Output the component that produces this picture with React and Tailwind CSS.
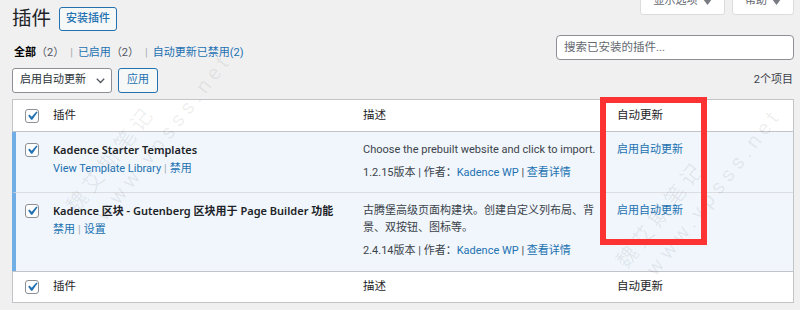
import React from 'react';

const font = { fontFamily: 'Roboto, "Noto Sans CJK SC", sans-serif' };
const titleFont = { fontFamily: '"Noto Sans", "Noto Sans CJK SC", sans-serif' };

function Check() {
  return (
    <span className="flex h-[14px] w-[14px] items-center justify-center rounded-[3px] border border-[#8c8f94] bg-white">
      <svg width="18" height="18" viewBox="0 0 20 20" className="shrink-0">
        <path d="M14.83 4.89l1.34.94-5.81 8.38H9.02L5.78 9.67l1.34-1.25 2.57 2.4z" fill="#2271b1" />
      </svg>
    </span>
  );
}

function Caret() {
  return (
    <svg width="9" height="6" viewBox="0 0 9 6" className="ml-[5px]">
      <path d="M0 0h9L4.5 6z" fill="#787c82" />
    </svg>
  );
}

const Sep = () => <span className="ml-[6px] mr-[5px] text-[#a7aaad]">|</span>;
const ActSep = () => <span className="mx-[3px] text-[#a7aaad]">|</span>;

function HeadRow({ top }) {
  return (
    <div
      className={`grid grid-cols-[40px_310px_254px_1fr] items-center border-l border-[#c3c4c7] text-[11.5px] text-[#1d2327] ${
        top ? 'h-[32px] border-b' : 'h-[31px] border-t'
      }`}
    >
      <div className="pl-[12px]">
        <Check />
      </div>
      <div>插件</div>
      <div>描述</div>
      <div>自动更新</div>
    </div>
  );
}

function PluginRow({ name, actions, desc, version, height, line }) {
  return (
    <div
      className={`grid grid-cols-[37px_310px_254px_1fr] border-l-4 border-[#72aee6] bg-[#f0f6fc] text-[11px] leading-[17px] ${height} ${line}`}
    >
      <div className="pl-[9px] pt-[11px]">
        <Check />
      </div>
      <div className="pt-[9px]">
        <div className="font-semibold text-[#1d2327]" style={titleFont}>
          {name}
        </div>
        <div className="mt-[2px] text-[#2271b1]">{actions}</div>
      </div>
      <div className="pt-[9px] text-[#3c434a]">
        <div>{desc}</div>
        <div className="mt-[6px]">
          {version}版本 | 作者：<span className="text-[#2271b1]">Kadence WP</span> |{' '}
          <span className="text-[#2271b1]">查看详情</span>
        </div>
      </div>
      <div className="pt-[9px] text-[#2271b1]">启用自动更新</div>
    </div>
  );
}

function Watermark({ x, y }) {
  return (
    <div
      className="pointer-events-none absolute origin-center rotate-[-52deg] text-[21px] leading-[28px] tracking-[5px] text-[#000]/[0.07]"
      style={{ left: x, top: y }}
    >
      <div>魏艾斯笔记</div>
      <div className="pl-[12px]">www.vpsss.net</div>
    </div>
  );
}

export default function App() {
  return (
    <div className="relative h-[310px] w-[800px] overflow-hidden bg-[#f0f0f1] pl-[12px] pr-[6px] text-[#3c434a]" style={font}>
      {/* title row */}
      <div className="flex h-[35px] items-start justify-between">
        <div className="mt-[7px] flex h-[24px] items-center">
          <h1 className="text-[19.5px] leading-[24px] text-[#1d2327]">插件</h1>
          <button className="ml-[8px] h-[24px] rounded-[3px] border border-[#2271b1] bg-[#f6f7f7] px-[6px] text-[11px] font-medium text-[#2271b1]">
            安装插件
          </button>
        </div>
        <div className="mt-[-12px] flex gap-[7px]">
          <button className="flex h-[27px] w-[85px] items-center justify-center rounded-b-[3px] border border-[#dcdcde] bg-white text-[11px] text-[#646970]">
            显示选项
            <Caret />
          </button>
          <button className="flex h-[27px] w-[62px] items-center justify-center rounded-b-[3px] border border-[#dcdcde] bg-white text-[11px] text-[#646970]">
            帮助
            <Caret />
          </button>
        </div>
      </div>

      {/* filters + search */}
      <div className="flex h-[26px] items-start justify-between">
        <div className="mt-[10px] pl-[2px] text-[11px] leading-[16px]">
          <span className="font-semibold text-[#000]">全部</span>
          <span className="text-[#50575e]">（2）</span>
          <Sep />
          <span className="text-[#2271b1]">已启用</span>
          <span className="text-[#50575e]">（2）</span>
          <Sep />
          <span className="text-[#2271b1]">自动更新已禁用(2)</span>
        </div>
        <div className="flex h-[25px] w-[238px] items-center rounded-[4px] border border-[#8c8f94] bg-white pl-[7px] text-[11.5px] text-[#646970]">
          搜索已安装的插件...
        </div>
      </div>

      {/* bulk actions */}
      <div className="mt-[7px] flex h-[25px] items-center justify-between">
        <div className="flex items-center">
          <div className="flex h-[25px] w-[100px] items-center justify-between rounded-[3px] border border-[#8c8f94] bg-white pl-[7px] pr-[6px] text-[11px] text-[#2c3338]">
            启用自动更新
            <svg width="9" height="6" viewBox="0 0 9 6">
              <path d="M0.8 0.8l3.7 3.7 3.7-3.7" fill="none" stroke="#50575e" strokeWidth="1.3" />
            </svg>
          </div>
          <button className="ml-[6px] h-[25px] w-[40px] rounded-[3px] border border-[#2271b1] bg-[#f6f7f7] text-[11px] text-[#2271b1]">
            应用
          </button>
        </div>
        <div className="pr-[1px] text-[11px] text-[#3c434a]">2个项目</div>
      </div>

      {/* table */}
      <div className="mt-[6px] border-y border-r border-[#c3c4c7] bg-white">
        <HeadRow top />
        <PluginRow
          name="Kadence Starter Templates"
          actions={
            <>
              View Template Library<ActSep />禁用
            </>
          }
          desc="Choose the prebuilt website and click to import."
          version="1.2.15"
          height="h-[61px]"
          line="border-b border-b-[#dcdde0]"
        />
        <PluginRow
          name="Kadence 区块 - Gutenberg 区块用于 Page Builder 功能"
          actions={
            <>
              禁用<ActSep />设置
            </>
          }
          desc={
            <>
              古腾堡高级页面构建块。创建自定义列布局、背
              <br />
              景、双按钮、图标等。
            </>
          }
          version="2.4.14"
          height="h-[78px]"
          line=""
        />
        <HeadRow />
      </div>

      <Watermark x={40} y={105} />
      <Watermark x={590} y={160} />

      {/* annotation box */}
      <div className="pointer-events-none absolute left-[600px] top-[97px] h-[148px] w-[107px] border-[6px] border-[#fd3232]" />
    </div>
  );
}
